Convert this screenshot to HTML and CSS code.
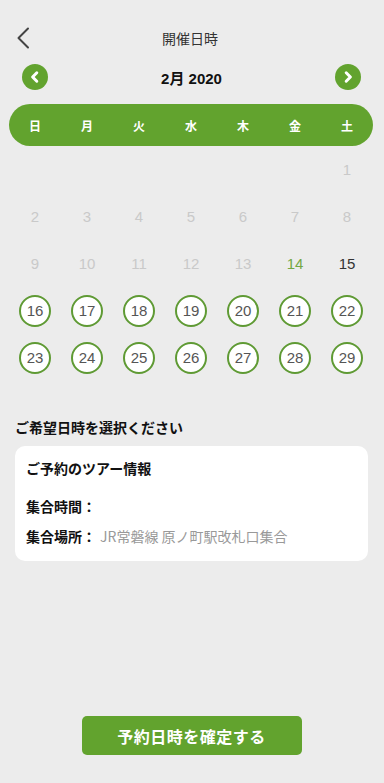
FILE: index.html
```html
<!DOCTYPE html>
<html lang="ja">
<head>
<meta charset="utf-8">
<meta name="viewport" content="width=device-width, initial-scale=1">
<title>開催日時</title>
<link rel="stylesheet" href="styles.css">
</head>
<body>
<div class="screen">
  <header class="header">
    <button class="back" aria-label="戻る">
      <svg width="14" height="22" viewBox="0 0 14 22"><path d="M12 1.5 L2.5 11 L12 20.5" fill="none" stroke="#444" stroke-width="2" stroke-linecap="round" stroke-linejoin="round"/></svg>
    </button>
    <h1 class="title">開催日時</h1>
  </header>

  <div class="month-row">
    <button class="nav-btn" aria-label="前の月">
      <svg width="26" height="26" viewBox="0 0 26 26"><circle cx="13" cy="13" r="13" fill="#62a32e"/><path d="M14.8 8.8 L10.6 13 L14.8 17.2" fill="none" stroke="#fff" stroke-width="3" stroke-linecap="round" stroke-linejoin="round"/></svg>
    </button>
    <div class="month">2月 2020</div>
    <button class="nav-btn" aria-label="次の月">
      <svg width="26" height="26" viewBox="0 0 26 26"><circle cx="13" cy="13" r="13" fill="#62a32e"/><path d="M11.2 8.8 L15.4 13 L11.2 17.2" fill="none" stroke="#fff" stroke-width="3" stroke-linecap="round" stroke-linejoin="round"/></svg>
    </button>
  </div>

  <div class="weekbar">
    <span>日</span><span>月</span><span>火</span><span>水</span><span>木</span><span>金</span><span>土</span>
  </div>

  <div class="days">
    <span class="day"></span><span class="day"></span><span class="day"></span><span class="day"></span><span class="day"></span><span class="day"></span><span class="day off">1</span>
    <span class="day off">2</span><span class="day off">3</span><span class="day off">4</span><span class="day off">5</span><span class="day off">6</span><span class="day off">7</span><span class="day off">8</span>
    <span class="day off">9</span><span class="day off">10</span><span class="day off">11</span><span class="day off">12</span><span class="day off">13</span><span class="day today">14</span><span class="day plain">15</span>
    <span class="day"><span class="ring">16</span></span><span class="day"><span class="ring">17</span></span><span class="day"><span class="ring">18</span></span><span class="day"><span class="ring">19</span></span><span class="day"><span class="ring">20</span></span><span class="day"><span class="ring">21</span></span><span class="day"><span class="ring">22</span></span>
    <span class="day"><span class="ring">23</span></span><span class="day"><span class="ring">24</span></span><span class="day"><span class="ring">25</span></span><span class="day"><span class="ring">26</span></span><span class="day"><span class="ring">27</span></span><span class="day"><span class="ring">28</span></span><span class="day"><span class="ring">29</span></span>
  </div>

  <h2 class="section-title">ご希望日時を選択ください</h2>

  <div class="card">
    <div class="card-title">ご予約のツアー情報</div>
    <div class="info-row"><span class="label">集合時間：</span></div>
    <div class="info-row"><span class="label">集合場所：</span><span class="value">JR常磐線 原ノ町駅改札口集合</span></div>
  </div>

  <div class="footer">
    <button class="confirm">予約日時を確定する</button>
  </div>
</div>
</body>
</html>
```

FILE: styles.css
```css
* { box-sizing: border-box; }

html, body {
  margin: 0;
  padding: 0;
  background: #ececec;
}

body {
  font-family: "Liberation Sans", "Noto Sans CJK JP", sans-serif;
  color: #222;
}

.screen {
  width: 384px;
  height: 783px;
  display: flex;
  flex-direction: column;
  overflow: hidden;
}

button {
  font-family: inherit;
  border: none;
  background: none;
  padding: 0;
  margin: 0;
  cursor: pointer;
}

.header {
  position: relative;
  height: 44px;
  margin-top: 16px;
  display: flex;
  align-items: center;
  justify-content: center;
}

.back {
  position: absolute;
  left: 16px;
  top: 11px;
  width: 14px;
  height: 22px;
  display: flex;
}

.title {
  margin: 0;
  font-size: 14px;
  font-weight: normal;
  color: #333;
  font-family: "Noto Sans CJK JP", sans-serif;
  line-height: 20px;
  padding-right: 4px;
}

.month-row {
  margin: 4px 23px 0 22px;
  height: 26px;
  display: flex;
  align-items: center;
  justify-content: space-between;
}

.nav-btn {
  width: 26px;
  height: 26px;
  display: flex;
}

.month {
  font-size: 15px;
  font-weight: bold;
  color: #111;
  font-family: "Liberation Sans", "Noto Sans CJK JP", sans-serif;
}

.weekbar {
  margin: 14px 11px 0 9px;
  height: 42px;
  background: #62a32e;
  border-radius: 21px;
  display: grid;
  grid-template-columns: repeat(7, 52px);
  align-items: center;
  justify-items: center;
  color: #fff;
  font-size: 12px;
  font-weight: bold;
  font-family: "Noto Sans CJK JP", sans-serif;
}

.days {
  margin: 0 11px 0 9px;
  display: grid;
  grid-template-columns: repeat(7, 52px);
  grid-auto-rows: 47px;
}

.day {
  display: flex;
  align-items: center;
  justify-content: center;
  font-size: 15px;
}

.day.off { color: #c9c9c9; }
.day.today { color: #74a844; }
.day.plain { color: #333; }

.ring {
  width: 32px;
  height: 32px;
  border-radius: 50%;
  border: 2px solid #5f9a34;
  background: #fff;
  color: #555;
  display: flex;
  align-items: center;
  justify-content: center;
  font-size: 15px;
}

.section-title {
  margin: 36px 0 0 15px;
  font-size: 14px;
  line-height: 20px;
  font-weight: bold;
  color: #111;
  font-family: "Noto Sans CJK JP", sans-serif;
}

.card {
  margin: 9px 16px 0 15px;
  height: 115px;
  background: #fff;
  border-radius: 10px;
  padding: 12px 10px 0 11px;
  font-family: "Noto Sans CJK JP", sans-serif;
  font-size: 14px;
}

.card-title {
  font-weight: bold;
  color: #111;
  line-height: 20px;
}

.info-row {
  display: flex;
  line-height: 20px;
  margin-top: 10px;
}

.info-row + .info-row { margin-top: 10px; }
.card-title + .info-row { margin-top: 18px; }

.label {
  font-weight: bold;
  color: #111;
}

.value {
  color: #999;
  margin-left: 4px;
}

.footer {
  margin-top: auto;
  padding-bottom: 28px;
  display: flex;
  justify-content: center;
}

.confirm {
  width: 220px;
  height: 39px;
  margin-right: 1px;
  background: #62a32e;
  border-radius: 5px;
  color: #fff;
  font-size: 16px;
  font-weight: bold;
  font-family: "Noto Sans CJK JP", sans-serif;
  letter-spacing: 0.5px;
}
```
